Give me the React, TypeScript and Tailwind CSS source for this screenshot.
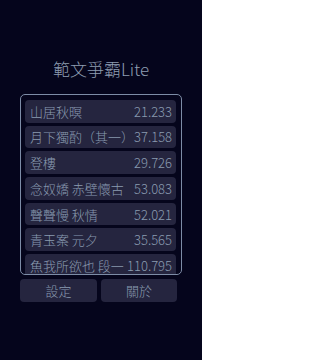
const poems = [
  { title: '山居秋暝', score: '21.233' },
  { title: '月下獨酌（其一）', score: '37.158' },
  { title: '登樓', score: '29.726' },
  { title: '念奴嬌 赤壁懷古', score: '53.083' },
  { title: '聲聲慢 秋情', score: '52.021' },
  { title: '青玉案 元夕', score: '35.565' },
  { title: '魚我所欲也 段一', score: '110.795' },
];

export default function App() {
  return (
    <div
      className="w-[202px] h-[360px] bg-[#05051c] text-[#8a9bb0] font-light overflow-hidden"
      style={{ fontFamily: '"Noto Sans CJK TC", "Noto Sans", sans-serif' }}
    >
      <h1 className="pt-[57px] h-[81px] text-center text-[17px] leading-[24px] font-light text-[#8e9db2]">
        範文爭霸Lite
      </h1>

      {/* poem list */}
      <div className="ml-[20px] mt-[13px] w-[162px] h-[181px] border border-[#7d8ca6] rounded-[5px] overflow-hidden pt-[5px] pl-[4px] pr-[5px]">
        <div className="flex flex-col gap-[3.2px]">
          {poems.map((p) => (
            <div
              key={p.title}
              className="h-[22.5px] shrink-0 flex items-center justify-between rounded-[4px] bg-[#25253f] pl-[5px] pr-[4px] text-[13px] leading-none whitespace-nowrap"
            >
              <span>{p.title}</span>
              <span>{p.score}</span>
            </div>
          ))}
        </div>
      </div>

      <div className="ml-[20px] mt-[4px] flex gap-[4px]">
        <button className="w-[77px] h-[23px] rounded-[4px] bg-[#25253f] text-[13px] leading-none font-light text-[#8a9bb0]">
          設定
        </button>
        <button className="w-[76px] h-[23px] rounded-[4px] bg-[#25253f] text-[13px] leading-none font-light text-[#8a9bb0]">
          關於
        </button>
      </div>
    </div>
  );
}
